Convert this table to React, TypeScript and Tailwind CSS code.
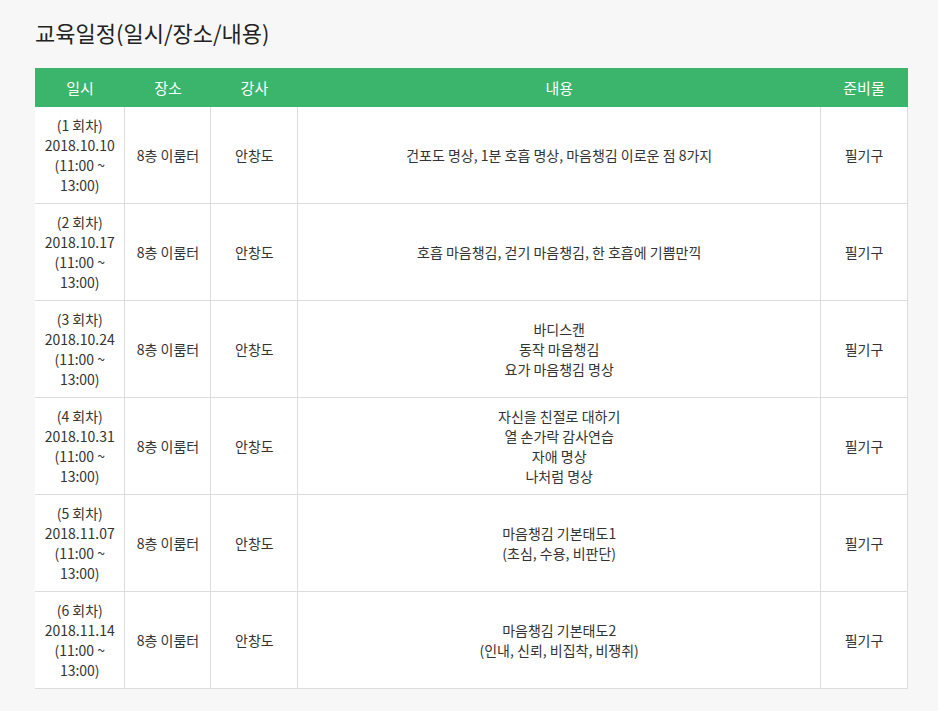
const rows = [
  { no: 1, date: '2018.10.10', content: ['건포도 명상, 1분 호흡 명상, 마음챙김 이로운 점 8가지'] },
  { no: 2, date: '2018.10.17', content: ['호흡 마음챙김, 걷기 마음챙김, 한 호흡에 기쁨만끽'] },
  { no: 3, date: '2018.10.24', content: ['바디스캔', '동작 마음챙김', '요가 마음챙김 명상'] },
  { no: 4, date: '2018.10.31', content: ['자신을 친절로 대하기', '열 손가락 감사연습', '자애 명상', '나처럼 명상'] },
  { no: 5, date: '2018.11.07', content: ['마음챙김 기본태도1', '(초심, 수용, 비판단)'] },
  { no: 6, date: '2018.11.14', content: ['마음챙김 기본태도2', '(인내, 신뢰, 비집착, 비쟁취)'] },
]

export default function App() {
  return (
    <div
      className="min-h-[711px] bg-[#f7f7f7] px-[35px] pt-[17px] pb-6 text-[#333]"
      style={{ fontFamily: '"Noto Sans CJK KR", "Noto Sans", sans-serif' }}
    >
      <h2 className="text-[22px] leading-[30px] font-normal text-[#222] mb-[21px]">교육일정(일시/장소/내용)</h2>

      <table className="w-[873px] border-collapse bg-white text-[14px] leading-[20px]">
        <thead>
          <tr className="bg-[#3bb56b] text-white text-[15px]">
            <th className="w-[90px] h-[39px] font-normal">일시</th>
            <th className="w-[86px] font-normal">장소</th>
            <th className="w-[87px] font-normal">강사</th>
            <th className="w-[523px] font-normal">내용</th>
            <th className="w-[87px] font-normal">준비물</th>
          </tr>
        </thead>
        <tbody>
          {rows.map((r) => (
            <tr key={r.no} className="border-b border-[#dddddd]">
              <td className="py-2 text-center align-middle h-[96px]">
                ({r.no} 회차)
                <br />
                {r.date}
                <br />
                (11:00 ~
                <br />
                13:00)
              </td>
              <td className="border-l border-[#dddddd] text-center">8층 이룸터</td>
              <td className="border-l border-[#dddddd] text-center">안창도</td>
              <td className="border-l border-[#dddddd] text-center">
                {r.content.map((line) => (
                  <div key={line}>{line}</div>
                ))}
              </td>
              <td className="border-x border-[#dddddd] text-center">필기구</td>
            </tr>
          ))}
        </tbody>
      </table>
    </div>
  )
}
